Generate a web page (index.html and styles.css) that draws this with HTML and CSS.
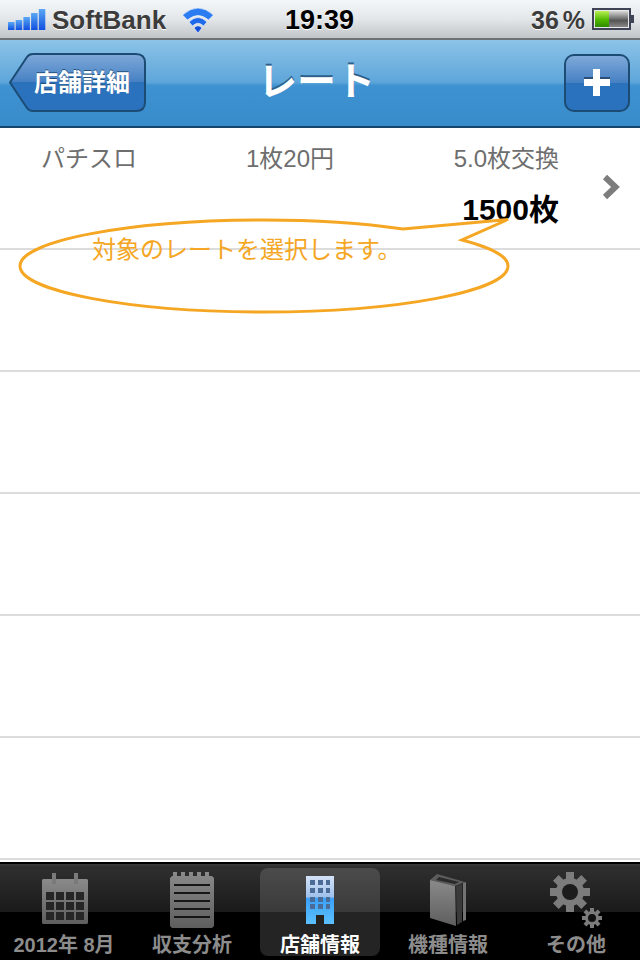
FILE: index.html
```html
<!DOCTYPE html>
<html lang="ja">
<head>
    <meta charset="UTF-8">
    <title>レート</title>
    <link rel="stylesheet" href="styles.css">
</head>
<body>
    <div class="statusbar">
        <div class="status_left">
            <svg class="signal" width="40" height="22" viewBox="0 0 40 22">
                <defs>
                    <linearGradient id="sig" x1="0" y1="0" x2="0" y2="1">
                        <stop offset="0" stop-color="#5aa8f5"/>
                        <stop offset="1" stop-color="#0f4fe0"/>
                    </linearGradient>
                </defs>
                <rect x="0" y="13" width="6.500" height="8" fill="url(#sig)"/>
                <rect x="7.700" y="11" width="6.500" height="10" fill="url(#sig)"/>
                <rect x="15.400" y="8" width="6.500" height="13" fill="url(#sig)"/>
                <rect x="23.100" y="4" width="6.500" height="17" fill="url(#sig)"/>
                <rect x="30.800" y="0" width="6.500" height="21" fill="url(#sig)"/>
            </svg>
            <span class="carrier">SoftBank</span>
            <svg class="wifi" width="34" height="26" viewBox="0 0 34 26">
                <path d="M0.500 8 Q16 -6 31.500 8 L26.500 13 Q16 4 5.500 13 Z" fill="#2a7cf0" stroke="#fff" stroke-width="0.600"/>
                <path d="M7 15 Q16 6 25 15 L21.500 19 Q16 13.500 10.500 19 Z" fill="#1f6aea" stroke="#fff" stroke-width="0.600"/>
                <path d="M12 21 Q16 16.500 20 21 L16 26 Z" fill="#1450d8" stroke="#fff" stroke-width="0.600"/>
            </svg>
        </div>
        <div class="clock">19:39</div>
        <div class="status_right">
            <span class="percent">36 %</span>
            <svg class="battery" width="42" height="22" viewBox="0 0 42 22">
                <defs>
                    <linearGradient id="batfill" x1="0" y1="0" x2="0" y2="1">
                        <stop offset="0" stop-color="#b9ef55"/>
                        <stop offset="0.55" stop-color="#4fb800"/>
                        <stop offset="1" stop-color="#2c8a00"/>
                    </linearGradient>
                    <linearGradient id="batempty" x1="0" y1="0" x2="0" y2="1">
                        <stop offset="0" stop-color="#d8d8d8"/>
                        <stop offset="0.6" stop-color="#555"/>
                        <stop offset="1" stop-color="#888"/>
                    </linearGradient>
                </defs>
                <rect x="1" y="1" width="37" height="20" fill="#e8e8e8" stroke="#3e4456" stroke-width="2"/>
                <rect x="3" y="3" width="14" height="16" fill="url(#batfill)"/>
                <rect x="17" y="3" width="19" height="16" fill="url(#batempty)"/>
                <rect x="39" y="7" width="3" height="8" fill="#3e4456"/>
            </svg>
        </div>
    </div>

    <div class="navbar">
        <div class="nav_left">
            <a class="backbtn">
                <svg class="btnshape" width="138" height="60" viewBox="0 0 138 60">
                    <defs>
                        <linearGradient id="btnfill" x1="0" y1="0" x2="0" y2="1">
                            <stop offset="0" stop-color="#7fa9d9"/>
                            <stop offset="0.5" stop-color="#4580c3"/>
                            <stop offset="0.5" stop-color="#2b72bd"/>
                            <stop offset="1" stop-color="#2a72be"/>
                        </linearGradient>
                    </defs>
                    <path d="M1 29.500 L18 4 Q20 1 24 1 H127 Q136 1 136 10 V49 Q136 58 127 58 H24 Q20 58 18 55 Z" fill="url(#btnfill)" stroke="#1c4c74" stroke-width="2"/>
                </svg>
                <span class="backtext">店舗詳細</span>
            </a>
        </div>
        <div class="navtitle">レート</div>
        <div class="nav_right">
            <a class="plusbtn"><span class="plus_h"></span><span class="plus_v"></span></a>
        </div>
    </div>

    <div class="list">
        <div class="row row_first">
            <span class="cell">パチスロ</span>
            <span class="cell cell_mid">1枚20円</span>
            <span class="cell cell_end">5.0枚交換</span>
            <svg class="chevron" width="18" height="26" viewBox="0 0 18 26">
                <path d="M3 3 L13.500 13 L3 23" fill="none" stroke="#7d7d7d" stroke-width="6"/>
            </svg>
            <span class="count">1500枚</span>
        </div>
        <div class="row"></div>
        <div class="row"></div>
        <div class="row"></div>
        <div class="row"></div>
        <div class="row"></div>

        <svg class="callout" width="640" height="120" viewBox="0 0 640 120">
            <path d="M403 19 C355 12 310 10 264 10 C129 10 20 31 20 56 C20 81 129 102 264 102 C399 102 508 81 508 56 C508 46 492 38 462 30 L508 9.500 Z" fill="none" stroke="#f5a623" stroke-width="3"/>
        </svg>
        <div class="callout_text">対象のレートを選択します。</div>
    </div>

    <div class="tabbar">
        <div class="tab">
            <svg class="tabicon" width="48" height="56" viewBox="0 0 48 56">
                <defs>
                    <linearGradient id="tabgray" x1="0" y1="0" x2="0" y2="1">
                        <stop offset="0" stop-color="#8a8a8a"/>
                        <stop offset="1" stop-color="#5e5e5e"/>
                    </linearGradient>
                </defs>
                <path d="M3 7 H47 L48 8 V51 L47 52 H3 L2 51 V8 Z" fill="url(#tabgray)"/>
                <rect x="12" y="1" width="4" height="11" fill="#7a7a7a"/>
                <rect x="34" y="1" width="4" height="11" fill="#7a7a7a"/>
                <g fill="#262626">
                    <rect x="6" y="20" width="8" height="8"/><rect x="16" y="20" width="8" height="8"/><rect x="26" y="20" width="8" height="8"/><rect x="36" y="20" width="8" height="8"/>
                    <rect x="6" y="30" width="8" height="8"/><rect x="16" y="30" width="8" height="8"/><rect x="26" y="30" width="8" height="8"/><rect x="36" y="30" width="8" height="8"/>
                    <rect x="6" y="40" width="8" height="8"/><rect x="16" y="40" width="8" height="8"/><rect x="26" y="40" width="8" height="8"/><rect x="36" y="40" width="8" height="8"/>
                </g>
            </svg>
            <span class="tablabel">2012年 8月</span>
        </div>
        <div class="tab">
            <svg class="tabicon" width="46" height="56" viewBox="0 0 46 56">
                <path d="M1 6 L3 4 H4 V0 H8 V4 H12 V0 H16 V4 H20 V0 H24 V4 H28 V0 H32 V4 H36 V0 H40 V4 H43 L45 6 V54 L43 56 H3 L1 54 Z" fill="url(#tabgray)"/>
                <g fill="#161616">
                    <rect x="5" y="12" width="36" height="2"/>
                    <rect x="5" y="20" width="36" height="2"/>
                    <rect x="5" y="28" width="36" height="2"/>
                    <rect x="5" y="36" width="36" height="2"/>
                    <rect x="5" y="44" width="36" height="2"/>
                </g>
            </svg>
            <span class="tablabel">収支分析</span>
        </div>
        <div class="tab tab_active">
            <svg class="tabicon" width="30" height="56" viewBox="0 0 30 56">
                <defs>
                    <linearGradient id="bldg" x1="0" y1="0" x2="0" y2="1">
                        <stop offset="0" stop-color="#d5e3f7"/>
                        <stop offset="0.44" stop-color="#9fc0ec"/>
                        <stop offset="0.46" stop-color="#3aa0f8"/>
                        <stop offset="1" stop-color="#5cc0ff"/>
                    </linearGradient>
                </defs>
                <path d="M1 4 H29 V52 H19 V43 H11 V52 H1 Z" fill="url(#bldg)"/>
                <g fill="#4b6c96">
                    <rect x="5" y="8" width="5" height="5"/><rect x="13" y="8" width="5" height="5"/><rect x="21" y="8" width="4" height="5"/>
                    <rect x="5" y="16" width="5" height="5"/><rect x="13" y="16" width="5" height="5"/><rect x="21" y="16" width="4" height="5"/>
                    <rect x="5" y="25" width="5" height="5"/><rect x="13" y="25" width="5" height="5"/><rect x="21" y="25" width="4" height="5"/>
                    <rect x="5" y="32" width="5" height="5"/><rect x="13" y="32" width="5" height="5"/><rect x="21" y="32" width="4" height="5"/>
                </g>
            </svg>
            <span class="tablabel">店舗情報</span>
        </div>
        <div class="tab">
            <svg class="tabicon" width="38" height="56" viewBox="0 0 38 56">
                <path d="M1 8 L8 2 L36 10 L26 14 Z" fill="#5c5c5c"/>
                <path d="M7 8 L10 5 L30 10 L26 12 Z" fill="#2a2a2a"/>
                <path d="M1 8 L26 14 L27 54 L1 46 Z" fill="url(#tabgray)"/>
                <path d="M27 14 L33 12 V50 L28 53 Z" fill="#3a3a3a"/>
                <path d="M34 11 L37 10 V48 L34 49 Z" fill="#737373"/>
            </svg>
            <span class="tablabel">機種情報</span>
        </div>
        <div class="tab">
            <svg class="tabicon" width="56" height="56" viewBox="0 0 56 56">
                <g fill="#7c7c7c">
                    <circle cx="22" cy="20" r="14"/>
                    <rect x="18" y="0" width="8" height="40"/>
                    <rect x="18" y="0" width="8" height="40" transform="rotate(45 22 20)"/>
                    <rect x="18" y="0" width="8" height="40" transform="rotate(90 22 20)"/>
                    <rect x="18" y="0" width="8" height="40" transform="rotate(135 22 20)"/>
                    <circle cx="44" cy="46" r="7"/>
                    <rect x="42" y="36" width="4" height="20"/>
                    <rect x="42" y="36" width="4" height="20" transform="rotate(45 44 46)"/>
                    <rect x="42" y="36" width="4" height="20" transform="rotate(90 44 46)"/>
                    <rect x="42" y="36" width="4" height="20" transform="rotate(135 44 46)"/>
                </g>
                <circle cx="22" cy="20" r="8" fill="#1c1c1c"/>
                <circle cx="44" cy="46" r="4" fill="#111"/>
            </svg>
            <span class="tablabel">その他</span>
        </div>
    </div>
</body>
</html>
```

FILE: styles.css
```css
body
{
    margin: 0;
    padding: 0;
    width: 640px;
    height: 960px;
    overflow: hidden;
    display: flex;
    flex-direction: column;
    background: #fff;
    font-family: "Liberation Sans", "Noto Sans CJK JP", sans-serif;
}

.statusbar
{
    height: 36px;
    flex: none;
    display: grid;
    grid-template-columns: 1fr auto 1fr;
    align-items: center;
    padding: 2px 6px 0 8px;
    background: linear-gradient(#f3f7f9, #e4e7e9 50%, #c2c5c8);
    border-bottom: 2px solid #6f7276;
}

.status_left
{
    display: flex;
    align-items: center;
}

.signal
{
    margin-right: 4px;
}

.carrier
{
    font-size: 26px;
    font-weight: bold;
    color: #3c3c3c;
    text-shadow: 0 1px 0 #fff;
}

.wifi
{
    margin-left: 16px;
}

.clock
{
    font-size: 27px;
    font-weight: bold;
    color: #000;
    text-shadow: 0 1px 0 #fff;
    margin-right: 3px;
}

.status_right
{
    display: flex;
    align-items: center;
    justify-content: flex-end;
}

.percent
{
    font-size: 25px;
    font-weight: bold;
    word-spacing: -3px;
    color: #3c3c3c;
    text-shadow: 0 1px 0 #fff;
    margin-right: 7px;
}

.battery
{
    margin-top: -2px;
}

.navbar
{
    height: 86px;
    flex: none;
    display: grid;
    grid-template-columns: 1fr auto 1fr;
    align-items: center;
    padding: 0 10px 0 9px;
    background: linear-gradient(#8cc3e8, #5ea6da 49%, #3f92d1 53%, #398cca);
    border-bottom: 2px solid #17456a;
}

.nav_right
{
    display: flex;
    justify-content: flex-end;
}

.navtitle
{
    font-size: 39px;
    font-weight: bold;
    color: #fff;
    text-shadow: 0 -2px 0 #2d618c;
    position: relative;
    top: -5px;
    left: -3px;
}

.backbtn
{
    width: 138px;
    height: 60px;
    position: relative;
    display: flex;
    align-items: center;
    justify-content: center;
}

.btnshape
{
    position: absolute;
    top: 0;
    left: 0;
}

.backtext
{
    position: relative;
    left: 4px;
    top: -3px;
    font-size: 24px;
    font-weight: bold;
    color: #fff;
    text-shadow: 0 -1px 0 #24507c;
}

.plusbtn
{
    width: 62px;
    height: 54px;
    position: relative;
    border: 2px solid #1c4c74;
    border-radius: 10px;
    background: linear-gradient(#7fa9d9, #4580c3 50%, #2b72bd 50%, #2a72be);
}

.plus_h
{
    position: absolute;
    left: 18px;
    top: 23px;
    width: 26px;
    height: 7px;
    background: #fff;
    box-shadow: 0 -2px 0 #2c4f78;
}

.plus_v
{
    position: absolute;
    left: 27px;
    top: 13px;
    width: 7px;
    height: 27px;
    background: #fff;
}

.list
{
    flex: 1;
    position: relative;
}

.row
{
    height: 120px;
    border-bottom: 2px solid #dcdcdc;
}

.row_first
{
    display: grid;
    grid-template-columns: 174px 150px 194px 1fr;
    grid-template-rows: 56px 1fr;
    padding-left: 41px;
    align-items: center;
}

.cell
{
    font-size: 24px;
    color: #6e6e6e;
}

.cell_mid
{
    text-align: center;
}

.cell_end
{
    text-align: right;
}

.chevron
{
    grid-column: 4;
    grid-row: 1 / 3;
    margin: -2px 0 0 43px;
}

.count
{
    grid-column: 1 / 4;
    grid-row: 2;
    text-align: right;
    font-size: 30px;
    font-weight: bold;
    line-height: 44px;
    color: #000;
    align-self: start;
    margin-top: 4px;
}

.callout
{
    position: absolute;
    top: 82px;
    left: 0;
}

.callout_text
{
    position: absolute;
    top: 102px;
    left: 92px;
    font-size: 24px;
    color: #f5a623;
}

.tabbar
{
    height: 92px;
    flex: none;
    display: grid;
    grid-template-columns: repeat(5, 1fr);
    padding: 4px 0 0 0;
    border-top: 2px solid #000;
    background: linear-gradient(#3c3c3c 0, #2f2f2f 3px, #1a1a1a 48px, #000 48px);
}

.tab
{
    display: flex;
    flex-direction: column;
    align-items: center;
    padding: 4px 0 1px 0;
    margin: 0 4px 4px 4px;
    border-radius: 8px;
}

.tab_active
{
    background: rgba(255, 255, 255, 0.14);
}

.tablabel
{
    margin-top: auto;
    font-size: 20px;
    font-weight: bold;
    color: #8c8c8c;
    line-height: 20px;
    white-space: nowrap;
}

.tab_active .tablabel
{
    color: #fff;
}
```
